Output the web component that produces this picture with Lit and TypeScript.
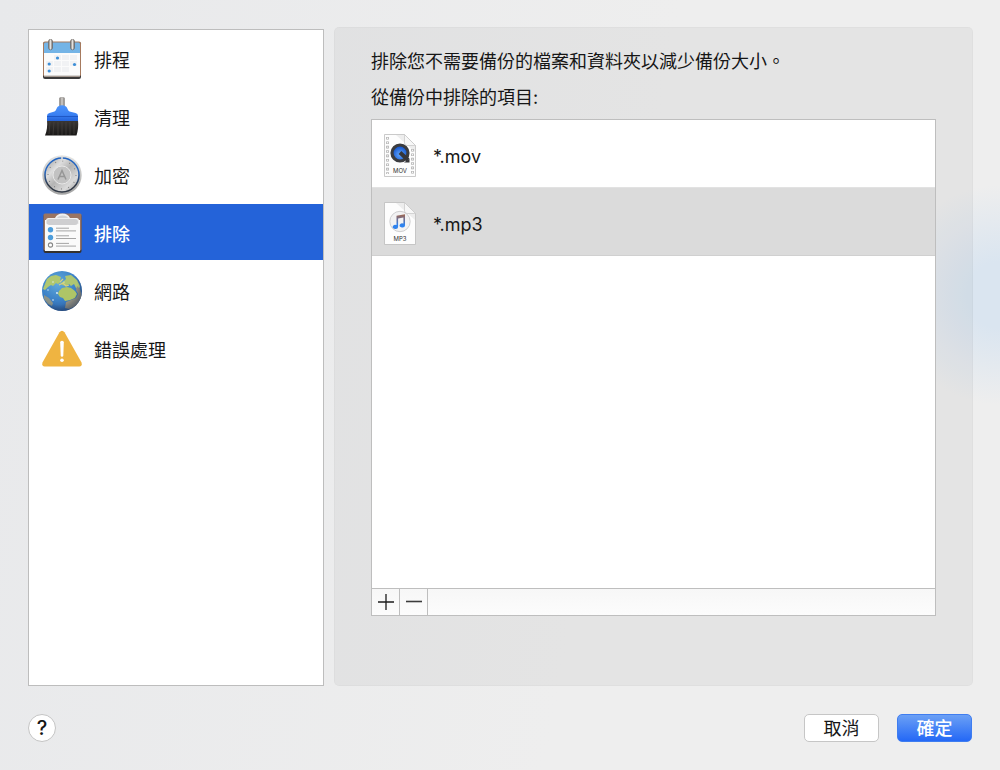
import { LitElement, html, css, svg } from "lit";
import { customElement, property, state } from "lit/decorators.js";
import { classMap } from "lit/directives/class-map.js";

const calendarIcon = svg`
  <svg viewBox="0 0 40 40" aria-hidden="true">
    <defs>
      <linearGradient id="ring" x1="0" x2="1"><stop offset="0" stop-color="#77706b"/><stop offset=".5" stop-color="#e4e2e0"/><stop offset="1" stop-color="#6a6460"/></linearGradient>
    </defs>
    <rect x="1" y="3" width="38" height="37" rx="2" fill="#3b3a3a"/>
    <rect x="1" y="2.500" width="38" height="35" rx="2" fill="#a67a5e"/>
    <path d="M2 14V5q0-1.500 1.500-1.500h33Q38 3.500 38 5v9z" fill="#74b4e6"/>
    <path d="M2 14h36v23H2z" fill="#fbfbfb"/>
    <path d="M2 36h36v1.500H2z" fill="#d7d5d3"/>
    <g fill="#f1f2f4">
      <rect x="12" y="16" width="7" height="5"/><rect x="20" y="16" width="7" height="5"/><rect x="28" y="16" width="7" height="5"/>
      <rect x="4" y="22" width="7" height="5"/><rect x="12" y="22" width="7" height="5"/><rect x="20" y="22" width="7" height="5"/><rect x="28" y="22" width="7" height="5"/>
      <rect x="4" y="28" width="7" height="5"/><rect x="12" y="28" width="7" height="5"/><rect x="20" y="28" width="7" height="5"/>
    </g>
    <g fill="#3d8fd8"><circle cx="15.500" cy="19" r="1.600"/><circle cx="7.200" cy="25" r="1.600"/><circle cx="32.500" cy="25.500" r="1.600"/><circle cx="7.200" cy="32" r="1.600"/></g>
    <g fill="url(#ring)" stroke="#6d6762" stroke-width=".6"><rect x="6.500" y=".3" width="4" height="10.500" rx="2"/><rect x="28.500" y=".3" width="4" height="10.500" rx="2"/></g>
  </svg>`;

const brushIcon = svg`
  <svg viewBox="0 0 40 40" aria-hidden="true">
    <defs>
      <linearGradient id="handle" x1="0" x2="1"><stop offset="0" stop-color="#77736f"/><stop offset=".5" stop-color="#d5d2cf"/><stop offset="1" stop-color="#7a7672"/></linearGradient>
      <linearGradient id="paint" x1="0" y1="0" x2="0" y2="1"><stop offset="0" stop-color="#4b93fb"/><stop offset=".6" stop-color="#3a80f2"/><stop offset="1" stop-color="#2463da"/></linearGradient>
      <linearGradient id="hair" x1="0" y1="0" x2="0" y2="1"><stop offset="0" stop-color="#3b3836"/><stop offset="1" stop-color="#191817"/></linearGradient>
    </defs>
    <rect x="17.500" y=".5" width="5" height="11" rx="1" fill="url(#handle)" stroke="#8d8985" stroke-width=".5"/>
    <path d="M5 23h31c.6 6 0 11-1.500 15.500H3C5 34 5.500 29 5 23z" fill="url(#hair)"/>
    <path d="M8 25l-1 12M12 25l-1 13M16 25v13M20 25v13M24 25v13M28 25v13M32 25v12" stroke="#4a4643" stroke-width=".6"/>
    <path d="M16 9.500q4-2.500 8 0c1.500 1 1.500 4 3.500 5l6 1.500q2.500.5 2.500 3V24H5v-5q0-2.500 2.500-3l5-1.500c2-1 2-4 3.500-5z" fill="url(#paint)"/>
    <path d="M5 19.500h31" stroke="#1d55c2" stroke-width=".9"/>
  </svg>`;

const dialIcon = svg`
  <svg viewBox="0 0 40 40" aria-hidden="true">
    <defs>
      <linearGradient id="rim" x1="0" y1="0" x2="0" y2="1"><stop offset="0" stop-color="#e6e6e4"/><stop offset="1" stop-color="#a2a2a2"/></linearGradient>
      <linearGradient id="face" x1="0" y1="0" x2="1" y2="1"><stop offset="0" stop-color="#999"/><stop offset=".3" stop-color="#dedede"/><stop offset=".5" stop-color="#b4b4b4"/><stop offset=".75" stop-color="#dadada"/><stop offset="1" stop-color="#8b8b8b"/></linearGradient>
      <linearGradient id="glow" x1="0" y1="0" x2="0" y2="1"><stop offset=".4" stop-color="#2465c0"/><stop offset=".8" stop-color="#303845"/></linearGradient>
    </defs>
    <circle cx="20" cy="20" r="19.700" fill="url(#rim)"/>
    <circle cx="20" cy="20" r="17" fill="url(#face)" stroke="url(#glow)" stroke-width="1.500"/>
    <circle cx="20" cy="20" r="14" fill="none" stroke="#777" stroke-width="1.200" stroke-dasharray=".8 6.530"/>
    <path d="M20 1v4.500" stroke="#ddd" stroke-width="1.600"/>
    <circle cx="20" cy="20" r="9" fill="#c2c2c2" stroke="#e8e8e8"/>
    <path d="M16 24.500L20 15.500l4 9M17.500 21.500h5" fill="none" stroke="#969696" stroke-width="1.500"/>
  </svg>`;

const clipboardIcon = svg`
  <svg viewBox="0 0 40 40" aria-hidden="true">
    <rect x="1.500" y="1" width="38" height="39" rx="2" fill="#34312f"/>
    <rect x="1.500" y=".5" width="38" height="37" rx="1.500" fill="#9a7462"/>
    <path d="M3 7h35v31H3z" fill="#fafafa"/>
    <path d="M4 11V7.500Q4 5 6.500 5H13q2-4.500 7.500-4.500T28 5h6.500Q37 5 37 7.500V11z" fill="#f0f0f0"/>
    <rect x="4.500" y="6" width="31.500" height="6" rx="3" fill="#cfcfd1"/>
    <path d="M15 5q1-2.500 5.500-2.500T26 5z" fill="#d4d4d5"/>
    <g fill="#4d9ddb"><circle cx="8.500" cy="16.800" r="2.700"/><circle cx="8.500" cy="24.500" r="2.700"/></g>
    <circle cx="8.500" cy="32" r="2.100" fill="#fff" stroke="#878787" stroke-width="1.100"/>
    <path d="M14 15.200h13M14 17.900h20M14 22.800h13M14 25.500h20M14 30.400h13M14 33.100h20" stroke="#9b9b9b" stroke-width=".9"/>
  </svg>`;

const globeIcon = svg`
  <svg viewBox="0 0 40 40" aria-hidden="true">
    <defs>
      <radialGradient id="sea" cx=".4" cy=".3" r=".75"><stop offset="0" stop-color="#62abdc"/><stop offset=".6" stop-color="#3b80c6"/><stop offset="1" stop-color="#2a5796"/></radialGradient>
      <radialGradient id="night" cx=".42" cy=".38" r=".66"><stop offset=".7" stop-color="#1c3152" stop-opacity="0"/><stop offset="1" stop-color="#1c3152" stop-opacity=".5"/></radialGradient>
      <clipPath id="ball"><circle cx="20" cy="20" r="20"/></clipPath>
    </defs>
    <circle cx="20" cy="20" r="20" fill="url(#sea)"/>
    <g clip-path="url(#ball)">
      <path d="M5 8l4-3 5-1 5 2-1 3 1 2-3 2-2-1-3 3-2-1-3 2-3 3-2-1z" fill="#b0c76f"/>
      <path d="M23 5l6-1 6 5 3 6-1 4-3-2-2-4-3 2-2-2-3 2-4-1-1-2 3-2 2-2z" fill="#aec672"/>
      <path d="M17 20l3-3 5-1 4 1 4 3 2 3-2 4-5 2-5 1-2-3-3-1-2-3z" fill="#aec567"/>
      <path d="M35 15l3 3 2 8-6 9-7 3-4-1 1-6 5-2 5-2 2-4-2-4z" fill="#8e8c80"/>
      <path d="M2 24l5 3 4 5-1 3-4-2-4-5z" fill="#8b9389"/>
      <path d="M17 14l4-2 3 3 3-1M21 8l-3 3" stroke="#d8d07f" stroke-width="1.200" fill="none"/>
      <g fill="#e9f4fa"><circle cx="15" cy="22" r=".9"/><circle cx="11" cy="29" r=".8"/><circle cx="6" cy="19" r=".7"/><circle cx="11" cy="11" r=".7"/><circle cx="22" cy="11" r=".6"/></g>
    </g>
    <circle cx="20" cy="20" r="20" fill="url(#night)"/>
  </svg>`;

const warningIcon = svg`
  <svg viewBox="0 0 40 40" aria-hidden="true">
    <path d="M17.500 3.200q2.500-3 5 0l17 30.300q1 4-2 4h-35q-3 0-2-4z" fill="#efb441"/>
    <path d="M18.200 13.200q0-1.500 1.800-1.500t1.800 1.500l-.5 13.500q-.1 1-1.300 1t-1.300-1z" fill="#fff"/>
    <circle cx="20" cy="31.300" r="1.800" fill="#fff"/>
  </svg>`;

const page = svg`
  <path d="M.5.500h20l11 11v31H.5z" fill="#fdfdfd" stroke="#bdbdbd" stroke-width=".8"/>
  <path d="M12 1h8.500L31 11.500V18z" fill="#e6e6e6" opacity=".7"/>
  <path d="M20.500.500v8.500q0 2.500 2.500 2.500h8.500z" fill="#f7f7f7" stroke="#c6c6c6" stroke-width=".7"/>`;

const movieIcon = svg`
  <svg viewBox="0 0 32 43" aria-hidden="true">
    <defs><radialGradient id="lens" cy=".6"><stop offset="0" stop-color="#64a9ff"/><stop offset="1" stop-color="#1455cc"/></radialGradient></defs>
    ${page}
    <path d="M3.500 3v37M28.500 15v25" stroke="#a9a9a9" stroke-width="2.600" stroke-dasharray="2.600 1.800"/>
    <path d="M3.500 3v37M28.500 15v25" stroke="#f6f6f6" stroke-width="1.200" stroke-dasharray="1.400 3" stroke-dashoffset="-.6"/>
    <circle cx="16" cy="19" r="8" fill="url(#lens)" stroke="#3b3c3f" stroke-width="3.200"/>
    <path d="M16 18.500l8 7.500" stroke="#35363a" stroke-width="4"/>
    <path d="M20 28.500h5.500v-4z" fill="#35363a"/>
    <text class="type" x="16" y="39" text-anchor="middle">MOV</text>
  </svg>`;

const musicIcon = svg`
  <svg viewBox="0 0 32 43" aria-hidden="true">
    <defs>
      <linearGradient id="note" x1="0" y1="0" x2="0" y2="1"><stop offset="0" stop-color="#a4694f"/><stop offset=".35" stop-color="#6d6e94"/><stop offset=".7" stop-color="#2f83ee"/></linearGradient>
    </defs>
    ${page}
    <circle cx="16" cy="19.500" r="10.200" fill="#f2f2f3" stroke="#c9c9cb" stroke-width=".9"/>
    <path d="M12.500 13.800l8.500-1.600v11.300a2.700 2.100 0 1 1-1.600-2v-6l-5.300 1v8.500a2.700 2.100 0 1 1-1.600-2z" fill="url(#note)"/>
    <text class="type" x="16" y="39" text-anchor="middle">MP3</text>
  </svg>`;

const plusIcon = svg`<svg viewBox="0 0 16 16" aria-hidden="true"><path d="M8 0v16M0 8h16" stroke="#1c1c1c" stroke-width="1.300"/></svg>`;
const minusIcon = svg`<svg viewBox="0 0 16 16" aria-hidden="true"><path d="M0 7.500h16" stroke="#3c3c3c" stroke-width="1.600"/></svg>`;

const fileIcons: Record<string, unknown> = { mov: movieIcon, mp3: musicIcon };

const categories = [
  { id: "schedule", label: "排程", icon: calendarIcon },
  { id: "cleanup", label: "清理", icon: brushIcon },
  { id: "encryption", label: "加密", icon: dialIcon },
  { id: "exclusions", label: "排除", icon: clipboardIcon },
  { id: "network", label: "網路", icon: globeIcon },
  { id: "errors", label: "錯誤處理", icon: warningIcon },
];

const resetButton = css`
  * { box-sizing: border-box; }
  button {
    margin: 0;
    padding: 0;
    border: 0;
    background: none;
    color: inherit;
    font: inherit;
    text-align: left;
  }
  svg { display: block; }
`;

@customElement("category-list")
export class CategoryList extends LitElement {
  @property() selected = "";

  static styles = [resetButton, css`
    :host {
      display: block;
      background: #fff;
      border: 1px solid #bdbdbd;
    }
    .list {
      display: flex;
      flex-direction: column;
      gap: 2px;
    }
    .item {
      display: flex;
      align-items: center;
      gap: 12px;
      height: 56px;
      padding: 2px 13px 0;
    }
    .item.active { background: #2463d9; color: #fff; font-weight: 500; }
    .icon { width: 40px; height: 40px; flex: none; }
    .label { padding-top: 3px; }
  `];

  private choose(id: string) {
    this.dispatchEvent(new CustomEvent("choose", { detail: id }));
  }

  render() {
    return html`<nav class="list">
      ${categories.map((c) => html`
        <button class=${classMap({ item: true, active: c.id === this.selected })}
          aria-current=${c.id === this.selected ? "page" : "false"}
          @click=${() => this.choose(c.id)}>
          <span class="icon">${c.icon}</span>
          <span class="label">${c.label}</span>
        </button>`)}
    </nav>`;
  }
}

@customElement("exclusion-list")
export class ExclusionList extends LitElement {
  @state() private items = ["*.mov", "*.mp3"];
  @state() private current = 1;

  static styles = [resetButton, css`
    :host {
      display: flex;
      flex-direction: column;
      border: 1px solid #bebebe;
      background: #fff;
    }
    .rows { flex: 1; }
    .row {
      display: flex;
      align-items: center;
      gap: 17px;
      width: 100%;
      height: 68px;
      padding: 3px 12px 0;
      border-bottom: 1px solid #e2e2e2;
    }
    .row.active { background: #dbdbdb; border-color: #d0d0d0; }
    .icon { width: 32px; height: 43px; flex: none; }
    .label { padding-top: 3px; }
    .type { font: 400 6px "Inter", sans-serif; fill: #333; }
    .bar {
      display: flex;
      height: 27px;
      border-top: 1px solid #bebebe;
      background: linear-gradient(#f7f7f7, #fcfcfc);
    }
    .tool {
      display: flex;
      align-items: center;
      justify-content: center;
      width: 28px;
      border-right: 1px solid #bebebe;
    }
    .tool svg { width: 16px; height: 16px; }
  `];

  private add() {
    this.items = [...this.items, "*.mov"];
  }

  private remove() {
    this.items = this.items.filter((_, i) => i !== this.current);
  }

  render() {
    return html`
      <div class="rows">
        ${this.items.map((name, i) => html`
          <button class=${classMap({ row: true, active: i === this.current })}
            aria-pressed=${i === this.current} @click=${() => (this.current = i)}>
            <span class="icon">${fileIcons[name.slice(2)]}</span>
            <span class="label">${name}</span>
          </button>`)}
      </div>
      <div class="bar">
        <button class="tool" aria-label="+" @click=${this.add}>${plusIcon}</button>
        <button class="tool" aria-label="−" @click=${this.remove}>${minusIcon}</button>
      </div>`;
  }
}

@customElement("app-root")
export class AppRoot extends LitElement {
  @state() private section = "exclusions";

  static styles = [resetButton, css`
    :host {
      display: flex;
      flex-direction: column;
      gap: 28px;
      box-sizing: border-box;
      min-height: 100vh;
      padding: 27px 27px 28px 28px;
      background:
        radial-gradient(ellipse 110px 110px at 100% 295px, #dae5f0 30%, transparent),
        linear-gradient(100deg, #e8e9eb, #eeeeee 60%);
      color: #161616;
      font: 18px/28px "Inter", "Noto Sans CJK TC", sans-serif;
    }
    .main {
      flex: 1;
      display: grid;
      grid-template-columns: 296px 1fr;
      gap: 10px;
    }
    .sidebar { margin-top: 2px; }
    .panel {
      display: flex;
      flex-direction: column;
      padding: 17px 37px 70px;
      border-radius: 5px;
      background: rgba(0, 0, 0, 0.04);
      box-shadow: inset 0 0 0 1px rgba(0, 0, 0, 0.02);
    }
    .line { margin: 0; line-height: 36px; }
    .exclusions { flex: 1; margin-top: 3px; }
    .footer {
      display: flex;
      align-items: center;
      gap: 18px;
      padding-right: 1px;
    }
    .help {
      width: 28px;
      height: 28px;
      margin-right: auto;
      border: 1px solid #c4c4c4;
      border-radius: 50%;
      background: #fff;
      font-size: 20px;
      font-weight: 500;
      line-height: 26px;
      text-align: center;
    }
    .push {
      width: 75px;
      height: 28px;
      padding-top: 2px;
      border: 1px solid #c6c6c6;
      border-radius: 5px;
      background: #fff;
      line-height: 24px;
      text-align: center;
    }
    .push.primary {
      border-color: #3f7df0;
      background: linear-gradient(#6ba0f5, #2468f6);
      color: #fff;
      font-weight: 500;
    }
  `];

  render() {
    return html`
      <div class="main">
        <category-list class="sidebar" .selected=${this.section}
          @choose=${(e: CustomEvent) => (this.section = e.detail)}></category-list>
        <section class="panel">
          <p class="line">排除您不需要備份的檔案和資料夾以減少備份大小。</p>
          <p class="line">從備份中排除的項目:</p>
          <exclusion-list class="exclusions"></exclusion-list>
        </section>
      </div>
      <footer class="footer">
        <button class="help">?</button>
        <button class="push">取消</button>
        <button class="push primary">確定</button>
      </footer>`;
  }
}
